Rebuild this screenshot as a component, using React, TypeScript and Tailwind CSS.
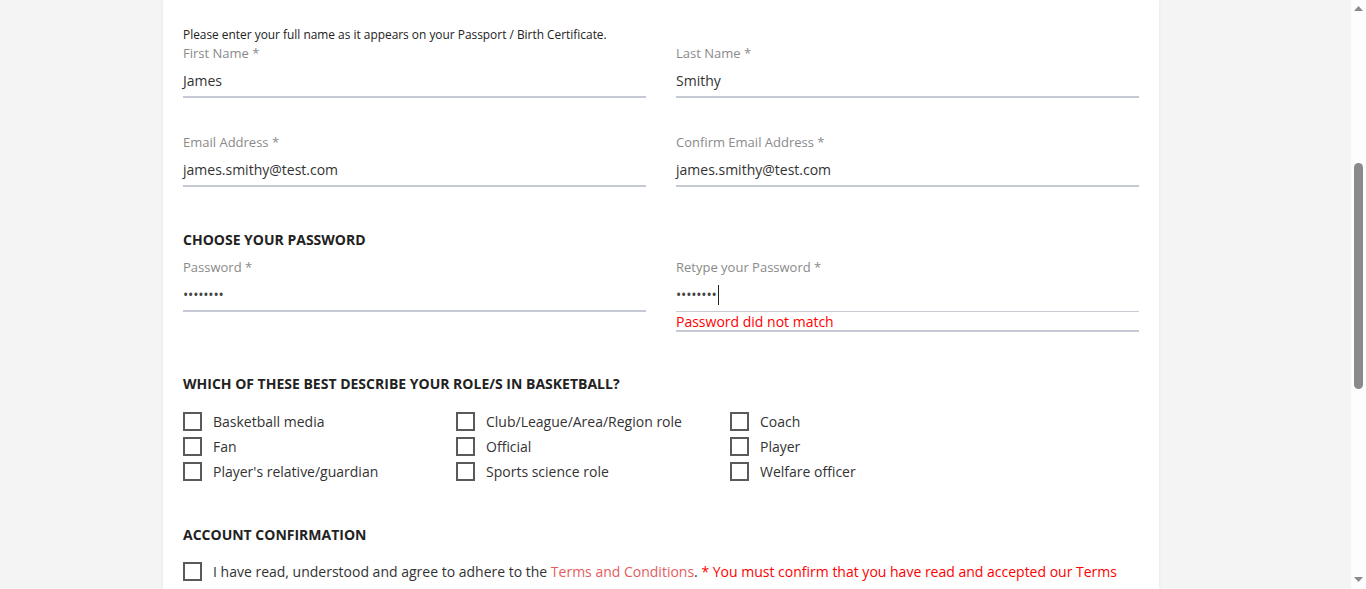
import React from 'react';

const roles = [
    'Basketball media',
    'Club/League/Area/Region role',
    'Coach',
    'Fan',
    'Official',
    'Player',
    "Player's relative/guardian",
    'Sports science role',
    'Welfare officer',
];

// Underlined text field with its label above it
const Field: React.FC<{ label: string; value: string; password?: boolean }> = ({ label, value, password }) => (
    <div className="flex flex-col">
        <label className="text-[13px] leading-[18px] text-[#8a8a8a]">{label}</label>
        <div className="mt-[2px] h-[34px] flex items-center border-b-2 border-[#c4c9d4] text-[14px] text-[#333]">
            <span className={password ? 'text-[#444] tracking-[-0.2px]' : ''}>{value}</span>
        </div>
    </div>
);

const Checkbox: React.FC<{ label: React.ReactNode }> = ({ label }) => (
    <div className="flex items-start gap-[11px] min-h-[25px]">
        <span className="mt-[3px] w-[19px] h-[19px] shrink-0 border-2 border-[#5a5a5a] bg-white" />
        <span className="text-[14px] leading-[25px] text-[#333]">{label}</span>
    </div>
);

const Heading: React.FC<{ children: React.ReactNode; className?: string }> = ({ children, className }) => (
    <h2 className={`text-[14px] leading-[18px] font-bold text-[#222] ${className ?? ''}`}>{children}</h2>
);

export default function App() {
    return (
        <div
            className="flex h-[589px] overflow-hidden bg-[#f4f4f4]"
            style={{ fontFamily: '"Open Sans", "Noto Sans", sans-serif' }}
        >
            <div className="flex-1 min-w-0">
                <div className="ml-[163px] w-[996px] h-full bg-white shadow-[0_0_4px_rgba(0,0,0,0.06)] px-5 pt-[27px]">
                    <p className="text-[11.9px] leading-[14px] text-[#222]">
                        Please enter your full name as it appears on your Passport / Birth Certificate.
                    </p>

                    <div className="grid grid-cols-2 gap-x-[30px] mt-[3px]">
                        <Field label="First Name *" value="James" />
                        <Field label="Last Name *" value="Smithy" />
                    </div>

                    <div className="grid grid-cols-2 gap-x-[30px] mt-[35px]">
                        <Field label="Email Address *" value="james.smithy@test.com" />
                        <Field label="Confirm Email Address *" value="james.smithy@test.com" />
                    </div>

                    <Heading className="mt-[44px]">CHOOSE YOUR PASSWORD</Heading>

                    <div className="grid grid-cols-2 gap-x-[30px] mt-[9px] items-start">
                        <Field label="Password *" value="••••••••" password />
                        <div className="flex flex-col">
                            <label className="text-[13px] leading-[18px] text-[#8a8a8a]">Retype your Password *</label>
                            <div className="border-b-2 border-[#c4c9d4]">
                                <div className="mt-[2px] h-[34px] flex items-center border-b border-[#c9ccd3] text-[14px]">
                                    <span className="text-[#444] tracking-[-0.2px]">••••••••</span>
                                    <span className="ml-[1px] w-px h-[20px] bg-[#222]" />
                                </div>
                                <p className="pt-[1px] text-[14px] leading-[17px] text-[#ff0000]">Password did not match</p>
                            </div>
                        </div>
                    </div>

                    <Heading className="mt-[43px]">WHICH OF THESE BEST DESCRIBE YOUR ROLE/S IN BASKETBALL?</Heading>

                    <div className="grid grid-cols-[273px_274px_1fr] mt-[16px]">
                        {roles.map((r) => (
                            <Checkbox key={r} label={r} />
                        ))}
                    </div>

                    <Heading className="mt-[42px]">ACCOUNT CONFIRMATION</Heading>

                    <div className="mt-[15px]">
                        <Checkbox
                            label={
                                <>
                                    I have read, understood and agree to adhere to the{' '}
                                    <span className="text-[#e35d5d]">Terms and Conditions</span>.{' '}
                                    <span className="text-[#ff0000]">
                                        * You must confirm that you have read and accepted our Terms and Conditions
                                    </span>
                                </>
                            }
                        />
                    </div>
                </div>
            </div>

            {/* Fake browser scrollbar */}
            <div className="w-[15px] shrink-0 bg-[#fdfdfd] flex flex-col items-center">
                <svg className="mt-[6px]" width="9" height="5" viewBox="0 0 9 5">
                    <path d="M0 5 L4.5 0 L9 5 Z" fill="#8a8a8a" />
                </svg>
                <div className="mt-[152px] w-[9px] h-[226px] rounded-full bg-[#8a8a8a]" />
                <div className="flex-1" />
                <svg className="mb-[7px]" width="9" height="5" viewBox="0 0 9 5">
                    <path d="M0 0 L9 0 L4.5 5 Z" fill="#8a8a8a" />
                </svg>
            </div>
        </div>
    );
}
